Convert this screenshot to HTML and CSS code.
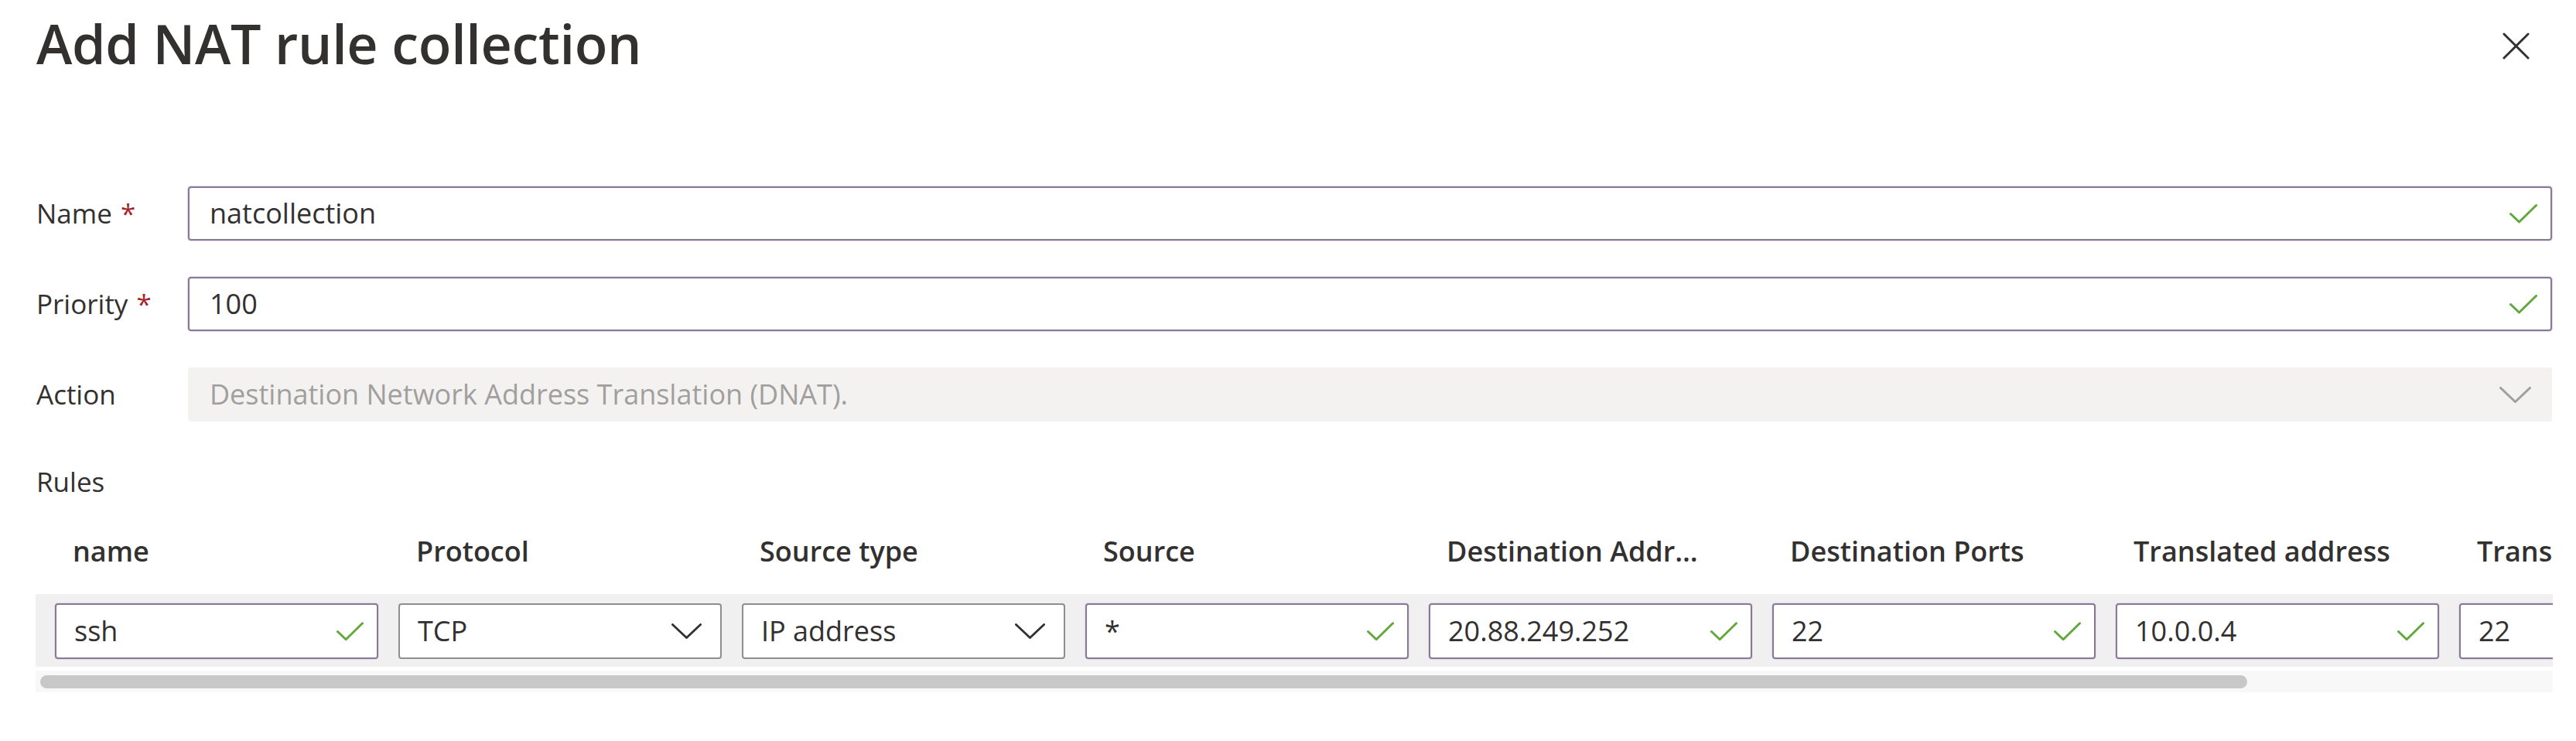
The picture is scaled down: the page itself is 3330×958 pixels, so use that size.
FILE: index.html
```html
<!DOCTYPE html>
<html lang="en">
<head>
<meta charset="utf-8">
<title>Add NAT rule collection</title>
<link rel="stylesheet" href="styles.css">
</head>
<body>
<div class="panel">
  <header class="top">
    <h1 class="title">Add NAT rule collection</h1>
    <button class="close" aria-label="Close">
      <svg viewBox="0 0 36 36" width="35" height="35"><path d="M2 2 L34 34 M34 2 L2 34" stroke="#323130" stroke-width="3" fill="none" stroke-linecap="round"/></svg>
    </button>
  </header>

  <div class="form">
    <div class="field">
      <label class="label">Name <span class="req">*</span></label>
      <div class="input valid">
        <span class="val">natcollection</span>
        <svg class="check" viewBox="0 0 36 25" width="36" height="25"><path d="M1.5 12.5 L12.5 23 L34.5 1.5" /></svg>
      </div>
    </div>
    <div class="field">
      <label class="label">Priority <span class="req">*</span></label>
      <div class="input valid">
        <span class="val">100</span>
        <svg class="check" viewBox="0 0 36 25" width="36" height="25"><path d="M1.5 12.5 L12.5 23 L34.5 1.5" /></svg>
      </div>
    </div>
    <div class="field">
      <label class="label">Action</label>
      <div class="input disabled">
        <span class="val">Destination Network Address Translation (DNAT).</span>
        <svg class="chev" viewBox="0 0 41 21" width="41" height="21"><path d="M1.5 1.5 L20.5 19.5 L39.5 1.5" /></svg>
      </div>
    </div>
  </div>

  <div class="rules-label">Rules</div>

  <div class="grid-wrap">
    <div class="grid-head">
      <div class="hcell">name</div>
      <div class="hcell">Protocol</div>
      <div class="hcell">Source type</div>
      <div class="hcell">Source</div>
      <div class="hcell"><span class="trunc">Destination Address</span></div>
      <div class="hcell">Destination Ports</div>
      <div class="hcell">Translated address</div>
      <div class="hcell">Translated port</div>
    </div>
    <div class="grid-row">
      <div class="cell valid"><span class="val">ssh</span><svg class="check sm" viewBox="0 0 36 25" width="35" height="25"><path d="M1.5 12.5 L12.5 23 L34.5 1.5" /></svg></div>
      <div class="cell select"><span class="val">TCP</span><svg class="chev dark" viewBox="0 0 41 21" width="39" height="20"><path d="M1.5 1.5 L20.5 19.5 L39.5 1.5" /></svg></div>
      <div class="cell select"><span class="val">IP address</span><svg class="chev dark" viewBox="0 0 41 21" width="39" height="20"><path d="M1.5 1.5 L20.5 19.5 L39.5 1.5" /></svg></div>
      <div class="cell valid"><span class="val">*</span><svg class="check sm" viewBox="0 0 36 25" width="35" height="25"><path d="M1.5 12.5 L12.5 23 L34.5 1.5" /></svg></div>
      <div class="cell valid"><span class="val">20.88.249.252</span><svg class="check sm" viewBox="0 0 36 25" width="35" height="25"><path d="M1.5 12.5 L12.5 23 L34.5 1.5" /></svg></div>
      <div class="cell valid"><span class="val">22</span><svg class="check sm" viewBox="0 0 36 25" width="35" height="25"><path d="M1.5 12.5 L12.5 23 L34.5 1.5" /></svg></div>
      <div class="cell valid"><span class="val">10.0.0.4</span><svg class="check sm" viewBox="0 0 36 25" width="35" height="25"><path d="M1.5 12.5 L12.5 23 L34.5 1.5" /></svg></div>
      <div class="cell valid"><span class="val">22</span><svg class="check sm" viewBox="0 0 36 25" width="35" height="25"><path d="M1.5 12.5 L12.5 23 L34.5 1.5" /></svg></div>
    </div>
    <div class="scroll"><div class="thumb"></div></div>
  </div>
</div>
</body>
</html>
```

FILE: styles.css
```css
* { box-sizing: border-box; }

html, body {
  margin: 0;
  background: #ffffff;
}

body {
  font-family: "Open Sans", "Noto Sans", sans-serif;
  color: #323130;
  font-size: 36px;
}

.panel {
  padding: 21px 31px 0 47px;
}

.top {
  display: flex;
  align-items: center;
  justify-content: space-between;
  height: 70px;
}

.title {
  margin: 0;
  font-size: 70px;
  line-height: 70px;
  font-weight: 600;
  color: #323130;
  letter-spacing: -0.3px;
}

.close {
  border: 0;
  background: transparent;
  padding: 0;
  margin: 6px 29px 0 0;
  width: 35px;
  height: 35px;
  display: flex;
}

.form {
  margin-top: 150px;
  display: flex;
  flex-direction: column;
  gap: 47px;
}

.field {
  display: flex;
  align-items: center;
  height: 70px;
}

.label {
  flex: 0 0 196px;
  line-height: 70px;
  font-size: 35px;
  white-space: nowrap;
}

.req {
  color: #a4262c;
  margin-left: 2px;
}

.input {
  flex: 1;
  height: 70px;
  display: flex;
  align-items: center;
  padding: 0 17px 0 26px;
  border-radius: 4px;
  line-height: 66px;
}

.val {
  flex: 1;
  white-space: nowrap;
  overflow: hidden;
}

.valid {
  border: 2px solid #877a93;
  box-shadow: 0 0 0 1px #ecd4f3;
  background: #fff;
}

.disabled {
  background: #f3f2f1;
  border: 2px solid #f3f2f1;
  color: #a19f9d;
  padding-right: 25px;
}

.check path {
  fill: none;
  stroke: #5fa83a;
  stroke-width: 3;
  stroke-linecap: round;
  stroke-linejoin: round;
}

.chev path {
  fill: none;
  stroke: #a19f9d;
  stroke-width: 3;
  stroke-linecap: round;
  stroke-linejoin: round;
}

.chev.dark path {
  stroke: #323130;
}

.rules-label {
  margin-top: 54px;
  height: 48px;
  line-height: 48px;
  font-size: 35px;
}

.grid-wrap {
  margin: 26px -1px 0 -1px;
  overflow: hidden;
}

.grid-head {
  display: flex;
  gap: 26px;
  padding-left: 25px;
  height: 80px;
  margin-bottom: 15px;
}

.hcell {
  flex: 0 0 418px;
  padding-left: 23px;
  font-weight: 600;
  font-size: 36px;
  line-height: 80px;
  white-space: nowrap;
  overflow: hidden;
}

.trunc {
  display: inline-block;
  max-width: 332px;
  overflow: hidden;
  text-overflow: ellipsis;
  white-space: nowrap;
  vertical-align: top;
}

.grid-row {
  display: flex;
  gap: 26px;
  padding: 12px 0 10px 25px;
  background: #f0f0f0;
}

.cell {
  flex: 0 0 418px;
  height: 72px;
  display: flex;
  align-items: center;
  padding: 0 17px 0 23px;
  border-radius: 4px;
  line-height: 68px;
  background: #fff;
}

.cell.select {
  border: 2px solid #8f8e8d;
  padding-right: 24px;
}

.scroll {
  margin-top: 5px;
  height: 28px;
  background: #f8f8f8;
  padding-top: 6px;
}

.thumb {
  margin-left: 6px;
  width: 2853px;
  height: 17px;
  border-radius: 9px;
  background: #c8c8c8;
}
```
